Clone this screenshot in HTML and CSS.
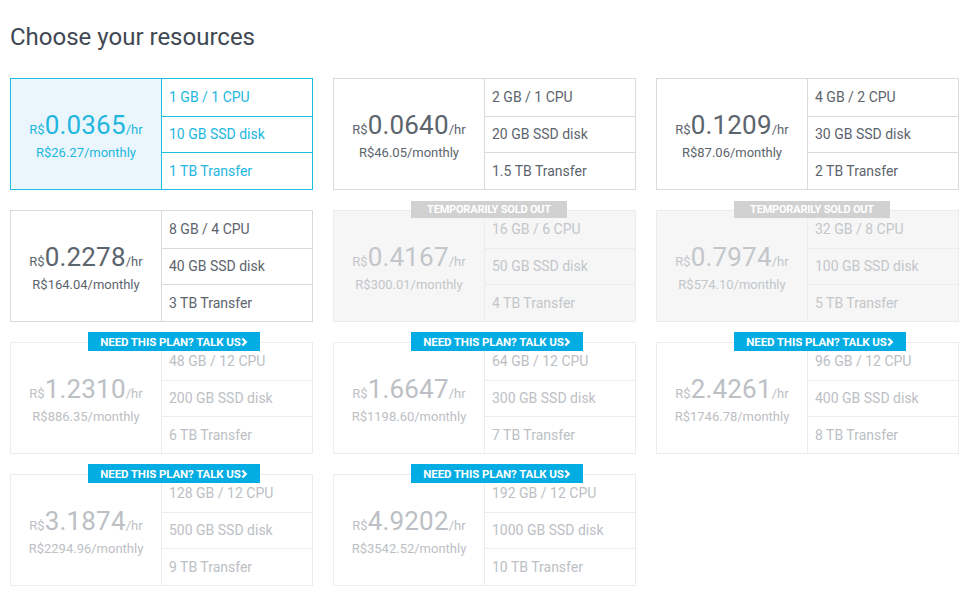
FILE: index.html
```html
<!DOCTYPE html>
<html lang="en">

<head>
    <meta charset="UTF-8">
    <title>Choose your resources</title>
    <link rel="stylesheet" href="styles.css">
</head>

<body>
    <h1 class="title">Choose your resources</h1>

    <div class="plans">
        <!-- row 1 -->
        <div class="plan selected">
            <div class="price">
                <div class="hourly"><span class="cur">R$</span><span class="num">0.0365</span><span class="per">/hr</span></div>
                <div class="monthly">R$26.27/monthly</div>
            </div>
            <div class="specs">
                <div class="spec">1 GB / 1 CPU</div>
                <div class="spec">10 GB SSD disk</div>
                <div class="spec">1 TB Transfer</div>
            </div>
        </div>
        <div class="plan">
            <div class="price">
                <div class="hourly"><span class="cur">R$</span><span class="num">0.0640</span><span class="per">/hr</span></div>
                <div class="monthly">R$46.05/monthly</div>
            </div>
            <div class="specs">
                <div class="spec">2 GB / 1 CPU</div>
                <div class="spec">20 GB SSD disk</div>
                <div class="spec">1.5 TB Transfer</div>
            </div>
        </div>
        <div class="plan">
            <div class="price">
                <div class="hourly"><span class="cur">R$</span><span class="num">0.1209</span><span class="per">/hr</span></div>
                <div class="monthly">R$87.06/monthly</div>
            </div>
            <div class="specs">
                <div class="spec">4 GB / 2 CPU</div>
                <div class="spec">30 GB SSD disk</div>
                <div class="spec">2 TB Transfer</div>
            </div>
        </div>

        <!-- row 2 -->
        <div class="plan">
            <div class="price">
                <div class="hourly"><span class="cur">R$</span><span class="num">0.2278</span><span class="per">/hr</span></div>
                <div class="monthly">R$164.04/monthly</div>
            </div>
            <div class="specs">
                <div class="spec">8 GB / 4 CPU</div>
                <div class="spec">40 GB SSD disk</div>
                <div class="spec">3 TB Transfer</div>
            </div>
        </div>
        <div class="plan sold-out">
            <span class="badge badge-sold">TEMPORARILY SOLD OUT</span>
            <div class="price">
                <div class="hourly"><span class="cur">R$</span><span class="num">0.4167</span><span class="per">/hr</span></div>
                <div class="monthly">R$300.01/monthly</div>
            </div>
            <div class="specs">
                <div class="spec">16 GB / 6 CPU</div>
                <div class="spec">50 GB SSD disk</div>
                <div class="spec">4 TB Transfer</div>
            </div>
        </div>
        <div class="plan sold-out">
            <span class="badge badge-sold">TEMPORARILY SOLD OUT</span>
            <div class="price">
                <div class="hourly"><span class="cur">R$</span><span class="num">0.7974</span><span class="per">/hr</span></div>
                <div class="monthly">R$574.10/monthly</div>
            </div>
            <div class="specs">
                <div class="spec">32 GB / 8 CPU</div>
                <div class="spec">100 GB SSD disk</div>
                <div class="spec">5 TB Transfer</div>
            </div>
        </div>

        <!-- row 3 -->
        <div class="plan talk">
            <a class="badge badge-talk" href="#">NEED THIS PLAN? TALK US<svg class="chev" viewBox="0 0 8 10"><path d="M1.5 1 L5.5 5 L1.5 9" /></svg></a>
            <div class="price">
                <div class="hourly"><span class="cur">R$</span><span class="num">1.2310</span><span class="per">/hr</span></div>
                <div class="monthly">R$886.35/monthly</div>
            </div>
            <div class="specs">
                <div class="spec">48 GB / 12 CPU</div>
                <div class="spec">200 GB SSD disk</div>
                <div class="spec">6 TB Transfer</div>
            </div>
        </div>
        <div class="plan talk">
            <a class="badge badge-talk" href="#">NEED THIS PLAN? TALK US<svg class="chev" viewBox="0 0 8 10"><path d="M1.5 1 L5.5 5 L1.5 9" /></svg></a>
            <div class="price">
                <div class="hourly"><span class="cur">R$</span><span class="num">1.6647</span><span class="per">/hr</span></div>
                <div class="monthly">R$1198.60/monthly</div>
            </div>
            <div class="specs">
                <div class="spec">64 GB / 12 CPU</div>
                <div class="spec">300 GB SSD disk</div>
                <div class="spec">7 TB Transfer</div>
            </div>
        </div>
        <div class="plan talk">
            <a class="badge badge-talk" href="#">NEED THIS PLAN? TALK US<svg class="chev" viewBox="0 0 8 10"><path d="M1.5 1 L5.5 5 L1.5 9" /></svg></a>
            <div class="price">
                <div class="hourly"><span class="cur">R$</span><span class="num">2.4261</span><span class="per">/hr</span></div>
                <div class="monthly">R$1746.78/monthly</div>
            </div>
            <div class="specs">
                <div class="spec">96 GB / 12 CPU</div>
                <div class="spec">400 GB SSD disk</div>
                <div class="spec">8 TB Transfer</div>
            </div>
        </div>

        <!-- row 4 -->
        <div class="plan talk">
            <a class="badge badge-talk" href="#">NEED THIS PLAN? TALK US<svg class="chev" viewBox="0 0 8 10"><path d="M1.5 1 L5.5 5 L1.5 9" /></svg></a>
            <div class="price">
                <div class="hourly"><span class="cur">R$</span><span class="num">3.1874</span><span class="per">/hr</span></div>
                <div class="monthly">R$2294.96/monthly</div>
            </div>
            <div class="specs">
                <div class="spec">128 GB / 12 CPU</div>
                <div class="spec">500 GB SSD disk</div>
                <div class="spec">9 TB Transfer</div>
            </div>
        </div>
        <div class="plan talk">
            <a class="badge badge-talk" href="#">NEED THIS PLAN? TALK US<svg class="chev" viewBox="0 0 8 10"><path d="M1.5 1 L5.5 5 L1.5 9" /></svg></a>
            <div class="price">
                <div class="hourly"><span class="cur">R$</span><span class="num">4.9202</span><span class="per">/hr</span></div>
                <div class="monthly">R$3542.52/monthly</div>
            </div>
            <div class="specs">
                <div class="spec">192 GB / 12 CPU</div>
                <div class="spec">1000 GB SSD disk</div>
                <div class="spec">10 TB Transfer</div>
            </div>
        </div>
    </div>
</body>

</html>
```

FILE: styles.css
```css
* {
    margin: 0;
    padding: 0;
    box-sizing: border-box;
}

body {
    background: #fff;
    font-family: Roboto, "Liberation Sans", sans-serif;
    padding: 22px 10px 10px;
}

.title {
    font-size: 24px;
    font-weight: 400;
    color: #3f4852;
    line-height: 30px;
    margin-bottom: 26px;
}

.plans {
    display: grid;
    grid-template-columns: repeat(3, 303px);
    grid-auto-rows: 112px;
    gap: 20px;
}

/* one plan card */
.plan {
    position: relative;
    display: grid;
    grid-template-columns: 151px 1fr;
    border: 1px solid #dadada;
    background: #fff;
    color: #5c646d;
}

.price {
    display: flex;
    flex-direction: column;
    justify-content: center;
    align-items: center;
    border-right: 1px solid #dadada;
    padding-top: 3px;
}

.hourly {
    white-space: nowrap;
    line-height: 30px;
}

.cur,
.per {
    font-size: 13px;
}

.num {
    font-size: 26px;
    letter-spacing: 0.2px;
}

.monthly {
    font-size: 13px;
    line-height: 18px;
    margin-top: -1px;
}

.specs {
    display: grid;
    grid-template-rows: 1fr 1fr 1fr;
}

.spec {
    display: flex;
    align-items: center;
    padding-left: 7px;
    font-size: 14px;
    border-top: 1px solid #dadada;
}

.spec:first-child {
    border-top: 0;
}

/* states */
.plan.selected {
    border-color: #1dbfe3;
    color: #22b7df;
}

.plan.selected .price {
    background: #eaf6fc;
    border-color: #1dbfe3;
}

.plan.selected .spec {
    border-color: #1dbfe3;
}

.plan.sold-out {
    background: #f6f6f6;
    border-color: #ececec;
    color: #c3c6ca;
}

.plan.sold-out .price,
.plan.sold-out .spec {
    border-color: #ececec;
}

.plan.talk {
    border-color: #ececec;
    color: #bcc0c5;
}

.plan.talk .price,
.plan.talk .spec {
    border-color: #ececec;
}

/* badges sit over the top border */
.badge {
    position: absolute;
    left: 77px;
    display: flex;
    align-items: center;
    justify-content: center;
    color: #fff;
    font-size: 11px;
    font-weight: 700;
    text-decoration: none;
    white-space: nowrap;
    z-index: 2;
}

.badge-sold {
    top: -10px;
    width: 156px;
    height: 17px;
    background: #d1d1d1;
    letter-spacing: -0.2px;
}

.badge-talk {
    top: -11px;
    width: 172px;
    height: 19px;
    background: #03ade3;
    font-size: 11.5px;
    letter-spacing: -0.1px;
}

.chev {
    width: 7px;
    height: 10px;
    margin-left: 0;
}

.chev path {
    fill: none;
    stroke: #fff;
    stroke-width: 2.6;
}
```
